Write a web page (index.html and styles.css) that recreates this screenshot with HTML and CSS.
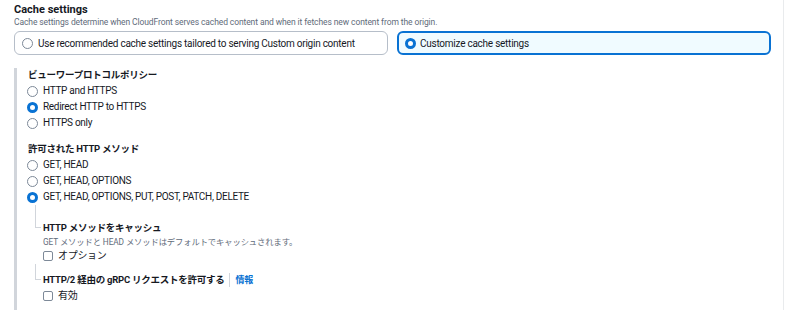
FILE: index.html
```html
<!DOCTYPE html>
<html lang="ja">
<head>
  <meta charset="UTF-8">
  <title>Cache settings</title>
  <link rel="stylesheet" href="styles.css">
</head>
<body>
  <div class="panel">
    <div class="field-title">Cache settings</div>
    <div class="field-desc">Cache settings determine when CloudFront serves cached content and when it fetches new content from the origin.</div>
    <div class="tiles">
      <label class="tile">
        <span class="radio"></span>
        <span>Use recommended cache settings tailored to serving Custom origin content</span>
      </label>
      <label class="tile selected">
        <span class="radio on"></span>
        <span>Customize cache settings</span>
      </label>
    </div>

    <div class="nested">
      <div class="group">
        <div class="group-title">ビューワープロトコルポリシー</div>
        <div class="option"><span class="radio"></span>HTTP and HTTPS</div>
        <div class="option"><span class="radio on"></span>Redirect HTTP to HTTPS</div>
        <div class="option"><span class="radio"></span>HTTPS only</div>
      </div>

      <div class="group">
        <div class="group-title">許可された HTTP メソッド</div>
        <div class="option"><span class="radio"></span>GET, HEAD</div>
        <div class="option"><span class="radio"></span>GET, HEAD, OPTIONS</div>
        <div class="option"><span class="radio on"></span>GET, HEAD, OPTIONS, PUT, POST, PATCH, DELETE</div>
      </div>

      <div class="tree">
        <div class="branch first">
          <div class="group-title">HTTP メソッドをキャッシュ</div>
          <div class="sub-desc">GET メソッドと HEAD メソッドはデフォルトでキャッシュされます。</div>
          <div class="option"><span class="check"></span>オプション</div>
        </div>
        <div class="branch last">
          <div class="group-title">HTTP/2 経由の gRPC リクエストを許可する<span class="info">情報</span></div>
          <div class="option"><span class="check"></span>有効</div>
        </div>
      </div>
    </div>
  </div>
</body>
</html>
```

FILE: styles.css
```css
body {
  margin: 0;
  background: #ffffff;
  font-family: Roboto, "Noto Sans CJK JP", sans-serif;
  color: #16191f;
  overflow: hidden;
}
.panel {
  width: 784px;
  height: 310px;
  border-right: 1px solid #e9ebed;
  padding: 3px 0 0 14px;
  box-sizing: border-box;
}
.field-title {
  font-size: 11px;
  font-weight: 700;
  line-height: 14px;
}
.field-desc {
  font-size: 8.5px;
  letter-spacing: -0.1px;
  color: #5f6b7a;
  line-height: 11px;
}
.tiles {
  display: flex;
  gap: 9px;
  margin-top: 3px;
  width: 757px;
}
.tile {
  flex: 1 1 0;
  min-width: 0;
  display: flex;
  align-items: center;
  gap: 5px;
  height: 24px;
  padding: 0 7px;
  border: 1px solid #b6bec9;
  border-radius: 6px;
  font-size: 10px;
  letter-spacing: -0.25px;
  box-sizing: border-box;
  white-space: nowrap;
}
.tile.selected {
  border: 2px solid #0972d3;
  background: #f0fbff;
  padding: 0 6px;
  gap: 4px;
}
.radio {
  width: 11px;
  height: 11px;
  border: 1px solid #7d8998;
  border-radius: 50%;
  box-sizing: border-box;
  flex: none;
  display: inline-block;
  background: #ffffff;
}
.radio.on {
  border: 3.5px solid #0972d3;
}
.nested {
  margin-top: 13px;
  border-left: 3px solid #d1d5db;
  padding-left: 11px;
  height: 250px;
}
.group {
  margin-bottom: 11px;
}
.group-title {
  font-size: 9.5px;
  letter-spacing: -0.25px;
  font-weight: 700;
  line-height: 14px;
  margin-bottom: 1px;
  display: flex;
  align-items: center;
  white-space: nowrap;
}
.option {
  display: flex;
  align-items: center;
  gap: 5px;
  font-size: 10px;
  letter-spacing: -0.3px;
  line-height: 16px;
  margin-left: -1px;
}
.check {
  width: 10px;
  height: 10px;
  border: 1px solid #7d8998;
  border-radius: 2px;
  box-sizing: border-box;
  display: inline-block;
  margin-left: 1px;
}
.tree {
  margin-left: 7px;
  margin-top: -12px;
  padding-top: 17px;
}
.branch {
  position: relative;
  padding-left: 8px;
}
.branch::before {
  content: "";
  position: absolute;
  left: 0;
  width: 5px;
  border-left: 1px solid #d1d5db;
  border-bottom: 1px solid #d1d5db;
}
.branch.first::before {
  top: -16px;
  height: 22px;
}
.branch.last {
  margin-top: 9px;
}
.branch.last::before {
  top: -9px;
  height: 15px;
}
.sub-desc {
  font-size: 8.3px;
  letter-spacing: -0.1px;
  color: #5f6b7a;
  line-height: 12px;
}
.info {
  font-size: 9px;
  color: #0972d3;
  border-left: 1px solid #d1d5db;
  padding-left: 5px;
  margin-left: 5px;
  line-height: 14px;
}
```
